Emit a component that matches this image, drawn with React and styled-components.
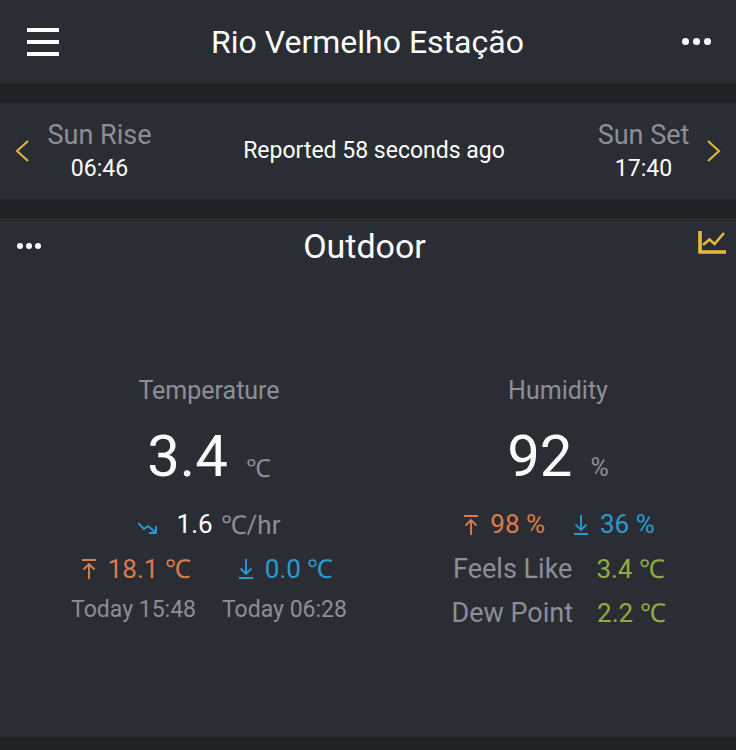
import React from "react"
import styled, { createGlobalStyle } from "styled-components"

const Global = createGlobalStyle`
  html, body { margin: 0; padding: 0; background: #202326; }
  body { font-family: Roboto, "Liberation Sans", sans-serif; }
`

const Page = styled.div`
  width: 736px;
  height: 750px;
  overflow: hidden;
  background: #202326;
  display: flex;
  flex-direction: column;
`

const Header = styled.div`
  height: 83px;
  flex: none;
  background: #2a2d34;
  display: flex;
  align-items: center;
  justify-content: space-between;
  padding: 0 25px 0 27px;
`

const Burger = styled.div`
  width: 32px;
  display: flex;
  flex-direction: column;
  gap: 8px;
`

const BurgerLine = styled.div`
  height: 4px;
  background: #fff;
`

const Title = styled.div`
  font-size: 32px;
  color: #fff;
  line-height: 83px;
  padding-top: 2px;
  margin-right: 6px;
`

const Dots = styled.div`
  display: flex;
  gap: ${props => props.gap}px;
`

const Dot = styled.div`
  width: ${props => props.size}px;
  height: ${props => props.size}px;
  border-radius: 50%;
  background: #fff;
`

const SunBar = styled.div`
  margin-top: 20px;
  height: 96px;
  flex: none;
  background: #2a2d34;
  display: flex;
  align-items: center;
  padding: 0 15px 0 14px;
`

const Chevron = styled.svg`
  width: 18px;
  height: 26px;
  flex: none;
  fill: none;
  stroke: #e8b93c;
  stroke-width: 2;
`

const SunBlock = styled.div`
  width: 119px;
  flex: none;
  padding-top: 2px;
  margin-left: ${props => props.left || 0}px;
  text-align: center;
`

const SunLabel = styled.div`
  font-size: 27px;
  line-height: 32px;
  color: #8c8f96;
`

const SunTime = styled.div`
  font-size: 23px;
  line-height: 32px;
  margin-top: 2px;
  color: #fff;
`

const Reported = styled.div`
  flex: 1;
  padding-left: 5px;
  text-align: center;
  font-size: 23px;
  line-height: 26px;
  color: #fff;
`

const Card = styled.div`
  margin-top: 19px;
  height: 519px;
  flex: none;
  background: #2a2d34;
  display: flex;
  flex-direction: column;
`

const CardTop = styled.div`
  height: 56px;
  display: flex;
  align-items: center;
  justify-content: space-between;
  padding: 0 10px 0 17px;
`

const CardTitle = styled.div`
  font-size: 34px;
  color: #fff;
  margin-right: 10px;
`

const ChartIcon = styled.svg`
  width: 28px;
  height: 26px;
  margin-bottom: 6px;
  fill: none;
  stroke: #e8b93c;
`

const Columns = styled.div`
  margin-top: 101px;
  display: grid;
  grid-template-columns: 418px 280px;
`

const Column = styled.div`
  display: flex;
  flex-direction: column;
  align-items: center;
`

const ColumnLabel = styled.div`
  font-size: 25px;
  line-height: 32px;
  color: #8c8f96;
`

const ValueRow = styled.div`
  margin-top: 13px;
  height: 72px;
  display: flex;
  align-items: center;
  gap: 18px;
`

const BigValue = styled.span`
  font-size: 58px;
  color: #fff;
`

const BigUnit = styled.span`
  font-size: 25px;
  color: #8c8f96;
  margin-top: 22px;
`

const Row = styled.div`
  margin-top: ${props => props.top}px;
  padding-right: ${props => props.right || 0}px;
  padding-left: ${props => props.left || 0}px;
  height: 32px;
  display: flex;
  align-items: center;
  justify-content: center;
  gap: ${props => props.gap}px;
  font-size: ${props => props.size || 26}px;
  color: ${props => props.color || "#8c8f96"};
`

const Rate = styled.span`
  margin: 0 -3px 0 8px;
  font-size: 26px;
  color: #fff;
`

const Label = styled.span`
  margin-top: 2px;
  font-size: 27px;
`

const Pair = styled.span`
  display: inline-flex;
  align-items: center;
  gap: 9px;
  color: ${props => props.color};
`

const Icon = styled.svg`
  width: 20px;
  height: 24px;
  fill: none;
  stroke: ${props => props.color};
  stroke-width: 1.9;
`

const HighIcon = () => (
  <Icon color="#dc7c4c" viewBox="0 0 20 24">
    <path d="M3 4h14M10 23V8M4.5 13.5L10 8l5.5 5.5" />
  </Icon>
)

const LowIcon = () => (
  <Icon color="#2a9ad0" viewBox="0 0 20 24">
    <path d="M3 22h14M10 3v15M4.5 12.5L10 18l5.5-5.5" />
  </Icon>
)

const App = () => (
  <Page>
    <Global />
    <Header>
      <Burger>
        <BurgerLine />
        <BurgerLine />
        <BurgerLine />
      </Burger>
      <Title>Rio Vermelho Estação</Title>
      <Dots gap={4}>
        <Dot size={7} />
        <Dot size={7} />
        <Dot size={7} />
      </Dots>
    </Header>

    <SunBar>
      <Chevron viewBox="0 0 18 26"><path d="M14 3L3 13l11 10" /></Chevron>
      <SunBlock left={8}>
        <SunLabel>Sun Rise</SunLabel>
        <SunTime>06:46</SunTime>
      </SunBlock>
      <Reported>Reported 58 seconds ago</Reported>
      <SunBlock>
        <SunLabel>Sun Set</SunLabel>
        <SunTime>17:40</SunTime>
      </SunBlock>
      <Chevron viewBox="0 0 18 26"><path d="M5 3l11 10L5 23" /></Chevron>
    </SunBar>

    <Card>
      <CardTop>
        <Dots gap={3}>
          <Dot size={6} />
          <Dot size={6} />
          <Dot size={6} />
        </Dots>
        <CardTitle>Outdoor</CardTitle>
        <ChartIcon viewBox="0 0 28 26">
          <path d="M2 1v21h26" strokeWidth="3.6" />
          <path d="M5 15l6.5-5.5 5 4.5L26 3" strokeWidth="2.6" />
        </ChartIcon>
      </CardTop>

      <Columns>
        <Column>
          <ColumnLabel>Temperature</ColumnLabel>
          <ValueRow>
            <BigValue>3.4</BigValue>
            <BigUnit>℃</BigUnit>
          </ValueRow>
          <Row top={16} gap={11}>
            <Icon color="#2a9ad0" viewBox="0 0 20 24">
              <path d="M0 11l6 6 4-3 7 6M18 14v7h-7" />
            </Icon>
            <Rate>1.6</Rate>
            <span>℃/hr</span>
          </Row>
          <Row top={12} gap={45} right={6}>
            <Pair color="#dc7c4c"><HighIcon />18.1 ℃</Pair>
            <Pair color="#2a9ad0"><LowIcon />0.0 ℃</Pair>
          </Row>
          <Row top={9} gap={26} size={23}>
            <span>Today 15:48</span>
            <span>Today 06:28</span>
          </Row>
        </Column>

        <Column>
          <ColumnLabel>Humidity</ColumnLabel>
          <ValueRow>
            <BigValue>92</BigValue>
            <BigUnit>%</BigUnit>
          </ValueRow>
          <Row top={16} gap={26}>
            <Pair color="#dc7c4c"><HighIcon />98 %</Pair>
            <Pair color="#2a9ad0"><LowIcon />36 %</Pair>
          </Row>
          <Row top={12} gap={24} left={2}>
            <Label>Feels Like</Label>
            <Pair color="#8fae3f">3.4 ℃</Pair>
          </Row>
          <Row top={12} gap={24} left={1}>
            <Label>Dew Point</Label>
            <Pair color="#8fae3f">2.2 ℃</Pair>
          </Row>
        </Column>
      </Columns>
    </Card>
  </Page>
)

export default App
